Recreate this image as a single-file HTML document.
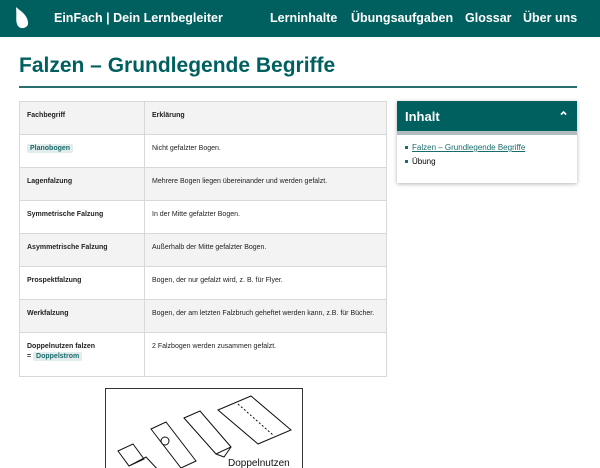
<!DOCTYPE html>
<html><head><meta charset="utf-8"><style>
*{margin:0;padding:0;box-sizing:border-box}
html,body{width:600px;height:468px;overflow:hidden}
body{background:#fff;font-family:"Liberation Sans",sans-serif;position:relative}
.hdr{position:absolute;left:0;top:0;width:600px;height:37px;background:#005f5f;color:#fff}
.hdr span{position:absolute;top:11px;font-size:12.5px;font-weight:bold}
h1{position:absolute;left:19px;top:54px;font-size:21px;color:#005f5f;font-weight:bold}
.line{position:absolute;left:19px;top:86px;width:558px;height:2px;background:#2a6f6f}
table{position:absolute;left:19px;top:101px;width:368px;border-collapse:collapse;font-size:7px;color:#222}
td{border:1px solid #d8d8d8;vertical-align:top;padding:10px 7px 9px;height:33px}
td:first-child{width:125px;font-weight:bold}
tr:nth-child(odd){background:#f3f3f3}
.tag{background:#e2ecec;color:#1a6b6b;padding:1px 3px;border-radius:2px;font-weight:bold}
.side{position:absolute;left:397px;top:101px;width:180px;height:82px;box-shadow:0 1px 4px rgba(0,0,0,.3);background:#fff}
.sh{height:30px;background:#005f5f;color:#fff;font-size:13px;font-weight:bold;padding:8px 8px}
.strip{height:4px;background:#b0bcc0}
.side ul{list-style:none;font-size:8px;padding:8px 8px}
.side li{margin-bottom:5px}
.side li:before{content:"";display:inline-block;width:3px;height:3px;background:#1a6b6b;margin-right:4px;vertical-align:middle}
.img{position:absolute;left:105px;top:388px;width:198px;height:90px;border:1px solid #333}
</style></head><body>
<div class="hdr">
<svg style="position:absolute;left:13px;top:6px" width="20" height="24" viewBox="0 0 20 24"><path d="M3 1 C6 4 14 8 15 16 C16 22 8 24 5 20 C2 16 4 10 3 1Z" fill="#fff"/></svg>
<span style="left:54px">EinFach | Dein Lernbegleiter</span>
<span style="left:270px">Lerninhalte</span>
<span style="left:351px">Übungsaufgaben</span>
<span style="left:465px">Glossar</span>
<span style="left:523px">Über uns</span>
</div>
<h1>Falzen – Grundlegende Begriffe</h1>
<div class="line"></div>
<table>
<tr><td>Fachbegriff</td><td style="font-weight:bold">Erklärung</td></tr>
<tr><td><span class="tag">Planobogen</span></td><td>Nicht gefalzter Bogen.</td></tr>
<tr><td>Lagenfalzung</td><td>Mehrere Bogen liegen übereinander und werden gefalzt.</td></tr>
<tr><td>Symmetrische Falzung</td><td>In der Mitte gefalzter Bogen.</td></tr>
<tr><td>Asymmetrische Falzung</td><td>Außerhalb der Mitte gefalzter Bogen.</td></tr>
<tr><td>Prospektfalzung</td><td>Bogen, der nur gefalzt wird, z. B. für Flyer.</td></tr>
<tr><td>Werkfalzung</td><td>Bogen, der am letzten Falzbruch geheftet werden kann, z.B. für Bücher.</td></tr>
<tr><td style="height:44px">Doppelnutzen falzen<br><span style="line-height:14px">= <span class="tag">Doppelstrom</span></span></td><td style="background:#fff">2 Falzbogen werden zusammen gefalzt.</td></tr>
</table>
<div class="side"><div class="sh">Inhalt<span style="float:right">⌃</span></div><div class="strip"></div>
<ul><li><span style="color:#1a6b6b;text-decoration:underline">Falzen – Grundlegende Begriffe</span></li><li>Übung</li></ul></div>
<div class="img"><svg width="198" height="90" fill="none" stroke="#111" stroke-width="1">
<path d="M112 21 L145 7 L185 41 L152 55Z"/><path d="M132 15 L167 46" stroke-dasharray="2 2"/>
<path d="M78 29 L94 22 L125 58 L110 65Z M110 65 L118 68 L125 58"/>
<path d="M45 40 L60 33 L90 72 L75 79Z"/><circle cx="59" cy="52" r="4"/>
<path d="M12 62 L27 55 L38 70 L23 77Z M23 77 L40 68 L55 84"/>
<text x="122" y="77" fill="#111" stroke="none" font-size="10" font-family="Liberation Sans">Doppelnutzen</text></svg></div>
</body></html>
